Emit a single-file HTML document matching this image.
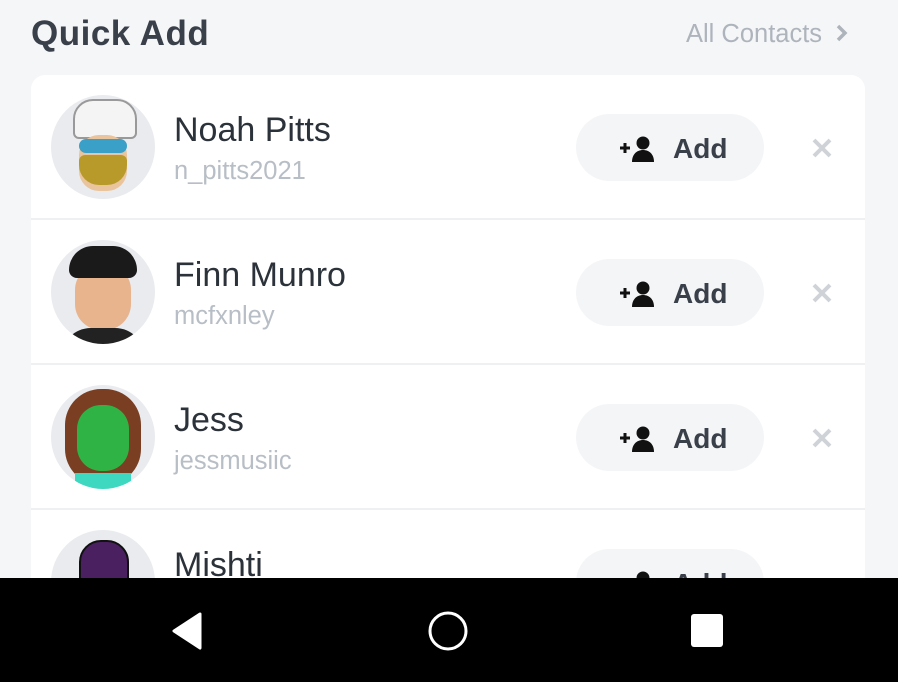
<!DOCTYPE html>
<html><head><style>
body{margin:0;width:898px;height:682px;overflow:hidden;background:#f5f6f8;font-family:"Liberation Sans",sans-serif;position:relative}
.title{position:absolute;left:31px;top:14px;font-size:35px;font-weight:bold;color:#3a404a;letter-spacing:0.5px}
.all{position:absolute;left:686px;top:20px;font-size:25.5px;color:#aeb4bc}
.card{position:absolute;left:31px;top:75px;width:834px;height:600px;background:#fff;border-radius:14px;overflow:hidden}
.row{position:absolute;left:0;width:834px;height:143px;border-bottom:2px solid #eff0f2}
.av{position:absolute;left:20px;top:20px;width:104px;height:104px;border-radius:50%;background:#e9ebee;overflow:hidden}
.nm{position:absolute;left:143px;top:36px;font-size:34px;color:#2c323a}
.un{position:absolute;left:143px;top:82px;font-size:25.5px;color:#b8bec6}
.btn{position:absolute;left:545px;top:39px;width:188px;height:67px;border-radius:34px;background:#f4f5f7;font-weight:bold;font-size:28px;color:#3a404a}
.btn span{position:absolute;left:97px;top:19px}
.btn svg{position:absolute;left:44px;top:22px}
.x{position:absolute;left:780px;top:62px}
.nav{position:absolute;left:0;top:578px;width:898px;height:104px;background:#000}
</style></head><body>
<div class="title">Quick Add</div>
<div class="all">All Contacts <svg width="14" height="18" style="margin-left:6px" viewBox="0 0 14 18"><path d="M3 2l7 7-7 7" fill="none" stroke="#aeb4bc" stroke-width="3.5"/></svg></div>
<div class="card">
 <div class="row" style="top:0">
  <div class="av"><div style="position:absolute;left:22px;top:4px;width:60px;height:36px;background:#f4f4f4;border:2px solid #999;border-radius:20px 20px 6px 6px"></div><div style="position:absolute;left:28px;top:40px;width:48px;height:56px;background:#e9c49c;border-radius:20px"></div><div style="position:absolute;left:28px;top:60px;width:48px;height:30px;background:#b89a2a;border-radius:6px 6px 20px 20px"></div><div style="position:absolute;left:28px;top:44px;width:48px;height:14px;background:#3aa0c8;border-radius:7px"></div></div>
  <div class="nm">Noah Pitts</div><div class="un">n_pitts2021</div>
  <div class="btn"><svg width="36" height="26" viewBox="0 0 36 26"><path d="M0 12h10M5 7v10" stroke="#111" stroke-width="3"/><circle cx="23" cy="7" r="6.5" fill="#111"/><path d="M12 26c0-8 5-12 11-12s11 4 11 12z" fill="#111"/></svg><span>Add</span></div>
  <svg class="x" width="22" height="22"><path d="M3 3l16 16M19 3L3 19" stroke="#cfd3d8" stroke-width="4"/></svg>
 </div>
 <div class="row" style="top:145px">
  <div class="av"><div style="position:absolute;left:24px;top:24px;width:56px;height:66px;background:#e8b48e;border-radius:26px"></div><div style="position:absolute;left:18px;top:6px;width:68px;height:32px;background:#1a1a1a;border-radius:30px 30px 10px 10px"></div><div style="position:absolute;left:10px;top:88px;width:84px;height:30px;background:#222;border-radius:30px 30px 0 0"></div></div>
  <div class="nm">Finn Munro</div><div class="un">mcfxnley</div>
  <div class="btn"><svg width="36" height="26" viewBox="0 0 36 26"><path d="M0 12h10M5 7v10" stroke="#111" stroke-width="3"/><circle cx="23" cy="7" r="6.5" fill="#111"/><path d="M12 26c0-8 5-12 11-12s11 4 11 12z" fill="#111"/></svg><span>Add</span></div>
  <svg class="x" width="22" height="22"><path d="M3 3l16 16M19 3L3 19" stroke="#cfd3d8" stroke-width="4"/></svg>
 </div>
 <div class="row" style="top:290px">
  <div class="av"><div style="position:absolute;left:14px;top:4px;width:76px;height:96px;background:#7a3e22;border-radius:36px"></div><div style="position:absolute;left:26px;top:20px;width:52px;height:66px;background:#2fb344;border-radius:24px"></div><div style="position:absolute;left:24px;top:88px;width:56px;height:20px;background:#3ed8c0"></div></div>
  <div class="nm">Jess</div><div class="un">jessmusiic</div>
  <div class="btn"><svg width="36" height="26" viewBox="0 0 36 26"><path d="M0 12h10M5 7v10" stroke="#111" stroke-width="3"/><circle cx="23" cy="7" r="6.5" fill="#111"/><path d="M12 26c0-8 5-12 11-12s11 4 11 12z" fill="#111"/></svg><span>Add</span></div>
  <svg class="x" width="22" height="22"><path d="M3 3l16 16M19 3L3 19" stroke="#cfd3d8" stroke-width="4"/></svg>
 </div>
 <div class="row" style="top:435px">
  <div class="av"><div style="position:absolute;left:28px;top:10px;width:46px;height:70px;background:#4a2060;border:2px solid #111;border-radius:22px"></div></div>
  <div class="nm">Mishti</div><div class="un">mishti_1999</div>
  <div class="btn"><svg width="36" height="26" viewBox="0 0 36 26"><path d="M0 12h10M5 7v10" stroke="#111" stroke-width="3"/><circle cx="23" cy="7" r="6.5" fill="#111"/><path d="M12 26c0-8 5-12 11-12s11 4 11 12z" fill="#111"/></svg><span>Add</span></div>
 </div>
</div>
<div class="nav">
 <svg style="position:absolute;left:168px;top:33px" width="36" height="40"><path d="M32 3L6 20l26 17z" fill="#fff" stroke="#fff" stroke-width="3" stroke-linejoin="round"/></svg>
 <svg style="position:absolute;left:426px;top:32px" width="44" height="42"><ellipse cx="22" cy="21" rx="18" ry="18" fill="none" stroke="#fff" stroke-width="3"/></svg>
 <div style="position:absolute;left:691px;top:36px;width:32px;height:33px;background:#fff;border-radius:3px"></div>
</div>
</body></html>
